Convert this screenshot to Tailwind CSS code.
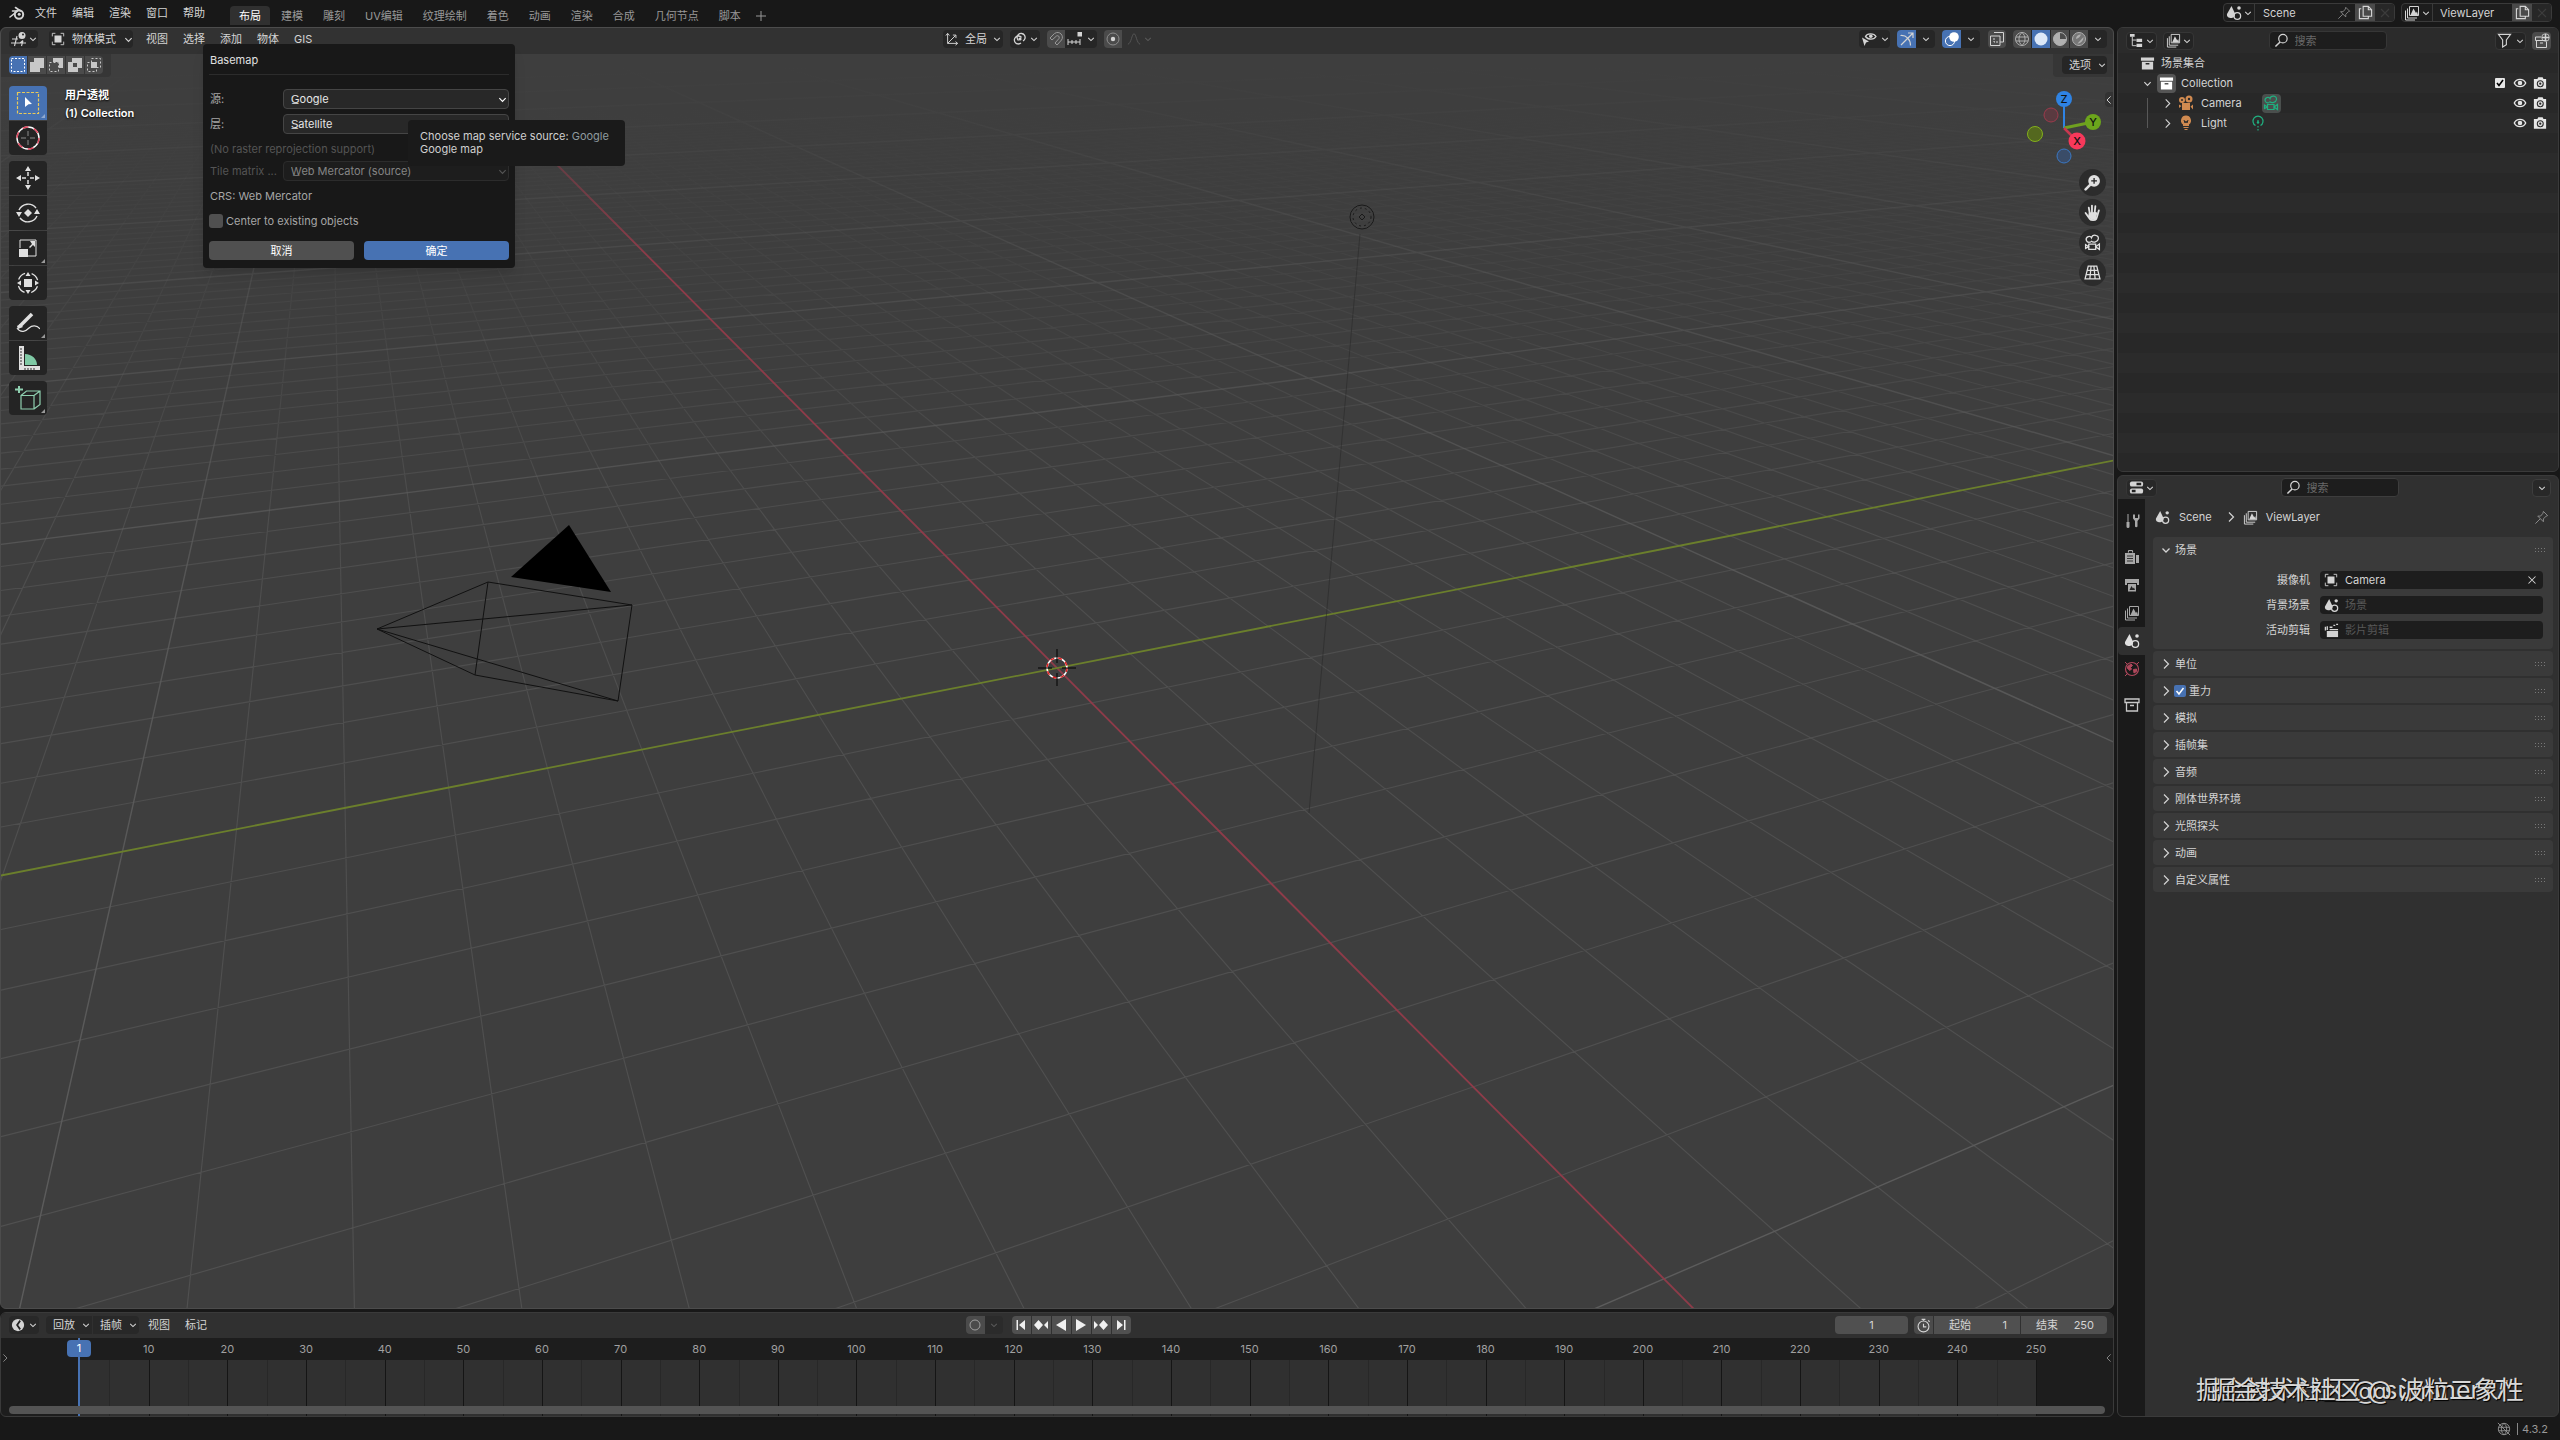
<!DOCTYPE html>
<html lang="zh-CN">
<head>
  <meta charset="UTF-8">
  <meta name="viewport" content="width=device-width, initial-scale=1.0">
  <title>Blender</title>
  <script src="https://cdn.jsdelivr.net/npm/@tailwindcss/browser@4"></script>
</head>
<body class="h-screen flex flex-col overflow-hidden bg-[#181818] text-[#d4d4d4] text-[11px] leading-4 font-[Inter,'Noto_Sans_CJK_SC',sans-serif]">

  <!-- Icon sprite -->
  <svg class="hidden">
    <symbol id="down" viewBox="0 0 10 10"><path d="M1.5 3.5L5 7l3.500-3.500" fill="none" stroke="currentColor" stroke-width="1.300"/></symbol>
    <symbol id="right" viewBox="0 0 10 10"><path d="M3 0.500L7.500 5 3 9.500" fill="none" stroke="currentColor" stroke-width="1.200"/></symbol>
    <symbol id="left" viewBox="0 0 10 10"><path d="M7 0.500L2.500 5 7 9.500" fill="none" stroke="currentColor" stroke-width="1.200"/></symbol>
    <symbol id="cross" viewBox="0 0 16 16"><path d="M4 4l8 8M12 4l-8 8" stroke="currentColor" stroke-width="1.200"/></symbol>
    <symbol id="blender" viewBox="0 0 16 16"><circle cx="10" cy="9.500" r="4.200" fill="none" stroke="currentColor" stroke-width="2"/><circle cx="10.200" cy="9.300" r="1.500" fill="currentColor"/><path d="M1 12l7.500-6H3.500M6.500 2.500l5 3.500" fill="none" stroke="currentColor" stroke-width="1.600" stroke-linecap="round"/></symbol>
    <symbol id="view3d" viewBox="0 0 16 16"><circle cx="11" cy="4.500" r="3.500" fill="currentColor"/><circle cx="12" cy="3.500" r="1" fill="#222"/><path d="M1 8h6M0 12h15M6 5L3.500 15M12 9.500l-1.500 5.500M9 12l3-2.500" fill="none" stroke="currentColor" stroke-width="1.100"/></symbol>
    <symbol id="object" viewBox="0 0 16 16"><rect x="4" y="4" width="8" height="8" fill="currentColor"/><path d="M1.500 5V1.500H5M11 1.500h3.500V5M14.500 11v3.500H11M5 14.500H1.500V11" fill="none" stroke="currentColor"/></symbol>
    <symbol id="orient" viewBox="0 0 16 16"><path d="M3 2v11h11M3 13L12 4M1 4l2-2.500L5 4M12 11l2.500 2-2.500 2M9 3.500h3.500V7" fill="none" stroke="currentColor" stroke-width="1.100"/></symbol>
    <symbol id="pivot" viewBox="0 0 16 16"><path d="M6.500 9.500A4 4 0 1 1 11 10M9.500 6.500A4 4 0 1 0 9 12" fill="none" stroke="currentColor" stroke-width="1.300"/><circle cx="8" cy="8" r="1.600" fill="currentColor"/></symbol>
    <symbol id="magnet" viewBox="0 0 16 16"><path d="M2 7l4.500-4.500c5-3.500 10 2.500 7 6.500L9 14l-2-2 4-4.500C12 5.500 10 4 8.500 5L4 9z" fill="none" stroke="currentColor"/></symbol>
    <symbol id="snap" viewBox="0 0 16 16"><path d="M1 8v6M5 9v4M9 9v4M13 8v6M1 11h12" stroke="currentColor"/><rect x="10.500" y="1" width="4.500" height="4.500" fill="currentColor"/></symbol>
    <symbol id="prop" viewBox="0 0 16 16"><circle cx="8" cy="8" r="6" fill="none" stroke="#8c8c8c"/><circle cx="8" cy="8" r="2.200" fill="currentColor"/></symbol>
    <symbol id="falloff" viewBox="0 0 16 16"><path d="M1 14C5 13 5.500 2 8 2s3 11 7 12" fill="none" stroke="currentColor"/></symbol>
    <symbol id="seleye" viewBox="0 0 16 16"><path d="M4.500 5.500C6 2 13 2 15 5.500 13 9 7 9 4.500 5.500z" fill="none" stroke="currentColor" stroke-width="1.300"/><circle cx="9.800" cy="5.300" r="1.800" fill="currentColor"/><path d="M1 6.500l7 4-3 1-1.500 3.500z" fill="currentColor"/></symbol>
    <symbol id="gizmo" viewBox="0 0 16 16"><path d="M2 14L13.500 2.500M9 2h5v5M1.500 4.500c6-.5 10 4 10 10" fill="none" stroke="currentColor" stroke-width="1.200"/></symbol>
    <symbol id="overlay" viewBox="0 0 16 16"><circle cx="10" cy="6" r="4.800" fill="currentColor"/><circle cx="6" cy="10" r="4.600" fill="none" stroke="currentColor"/></symbol>
    <symbol id="xray" viewBox="0 0 16 16"><path d="M5 1.500h9.500v9.500H11M1.500 5H11v9.500H1.500z" fill="none" stroke="currentColor"/><path d="M5 7v4h4" fill="none" stroke="currentColor" stroke-dasharray="2 1"/></symbol>
    <symbol id="wire" viewBox="0 0 16 16"><path d="M8 1.500a6.500 6.500 0 1 0 0 13 6.500 6.500 0 0 0 0-13zm0 0c-4 3-4 10 0 13M8 1.500c4 3 4 10 0 13M2 6h12M2 10h12" fill="none" stroke="currentColor"/></symbol>
    <symbol id="solid" viewBox="0 0 16 16"><circle cx="8" cy="8" r="6.500" fill="currentColor"/></symbol>
    <symbol id="matprev" viewBox="0 0 16 16"><circle cx="8" cy="8" r="6.500" fill="none" stroke="currentColor"/><path d="M8 1.500A6.500 6.500 0 0 0 8 14.500V8h6.500A6.500 6.500 0 0 1 8 14.500V8z" fill="currentColor"/></symbol>
    <symbol id="rendered" viewBox="0 0 16 16"><circle cx="8" cy="8" r="6.500" fill="#777" stroke="currentColor"/><path d="M5 8c0-3 2-4.500 5-4.500C9 6 8 7 5 8zM12.500 6c0 4-3 6.500-6 6.500" fill="currentColor"/></symbol>
    <symbol id="scene" viewBox="0 0 16 16"><path d="M5.500 1L9 8.500C9.500 12 7 13 5 13S.5 12 1 9z" fill="currentColor"/><circle cx="13" cy="3" r="1.800" fill="currentColor"/><circle cx="11.300" cy="11" r="3.300" fill="none" stroke="currentColor" stroke-width="1.300"/></symbol>
    <symbol id="layers" viewBox="0 0 16 16"><path d="M5.500 1.500h9v9h-9zM3.500 3.500v9.500H13M1.500 5.500V15H11" fill="none" stroke="currentColor"/><path d="M6.500 10l3-6.500L12 8l1-1.500 1 3.500z" fill="currentColor"/></symbol>
    <symbol id="pin" viewBox="0 0 16 16"><path d="M10 1.500l4.500 4.500-1.500.5-3 3v3L4 6.500h3l2.500-3zM6.500 9.500L1.500 14.500" fill="none" stroke="currentColor"/></symbol>
    <symbol id="copy" viewBox="0 0 16 16"><path d="M5.500 1.500h5.500L14.500 5v7h-9zM11 1.500V5h3.500M3.500 4H1.500v10.500H11v-2" fill="none" stroke="currentColor" stroke-width="1.200"/></symbol>
    <symbol id="outliner" viewBox="0 0 16 16"><path d="M1 1h5v3H1zM8 6h6v3.500H8zM8 11.500h6V15H8z" fill="currentColor"/><path d="M3.500 4v9.500H8M3.500 7.500H8" fill="none" stroke="currentColor"/></symbol>
    <symbol id="search" viewBox="0 0 16 16"><circle cx="9.500" cy="6" r="4.500" fill="none" stroke="currentColor" stroke-width="1.300"/><path d="M6.500 9.500l-5 5" stroke="currentColor" stroke-width="1.600"/></symbol>
    <symbol id="filter" viewBox="0 0 16 16"><path d="M1.500 1.500h13L10 7.500v5L6 15V7.500z" fill="none" stroke="currentColor" stroke-width="1.200"/></symbol>
    <symbol id="newcol" viewBox="0 0 16 16"><path d="M7 4H1.500v3.500h11M2.500 7.500v7h10v-6M6 10h3" fill="none" stroke="currentColor"/><path d="M11.500 1v7M8 4.500h7" stroke="currentColor" stroke-width="1.500"/><circle cx="11.500" cy="4.500" r="3.800" fill="none" stroke="currentColor" stroke-width=".8"/></symbol>
    <symbol id="archive" viewBox="0 0 16 16"><path d="M1 1.500h14V5H1zM2 6h12v8.500H2zM6 7.500v1.500h4V7.500z" fill="currentColor" fill-rule="evenodd"/></symbol>
    <symbol id="archiveo" viewBox="0 0 16 16"><path d="M1 2h14v3.500H1zM2.500 5.500V14h11V5.500M6 8.500h4" fill="none" stroke="currentColor" stroke-width="1.300"/></symbol>
    <symbol id="eye" viewBox="0 0 16 16"><path d="M1.500 8C4 2.500 12 2.500 14.500 8 12 13.500 4 13.500 1.500 8z" fill="none" stroke="currentColor" stroke-width="1.600"/><circle cx="8" cy="8" r="2.600" fill="currentColor"/></symbol>
    <symbol id="photo" viewBox="0 0 16 16"><path d="M1 3.500h4L6 1.500h5l1 2h3v11H1z" fill="currentColor"/><circle cx="8.300" cy="8.800" r="4" fill="#2a2a2a"/><circle cx="8.300" cy="8.800" r="2.800" fill="currentColor"/><circle cx="8.300" cy="8.800" r="1.300" fill="#2a2a2a"/></symbol>
    <symbol id="cam" viewBox="0 0 16 16"><circle cx="4" cy="5" r="3" fill="currentColor"/><circle cx="11" cy="4" r="3.500" fill="currentColor"/><path d="M4 8h8v7H4zM12.500 11.500L15 9.500v5zM1 9.500l2.500 1.500-2.500 2z" fill="currentColor"/><circle cx="4" cy="5" r="1" fill="#2a2a2a"/><circle cx="11" cy="4" r="1.200" fill="#2a2a2a"/></symbol>
    <symbol id="camo" viewBox="0 0 16 16"><path d="M6.500 7.500C2 9 .5 4 4 2.500c1.500-.5 2.500 0 3 1C8 0 14 .5 13.500 4.500 13 7.500 9 8.500 6.500 6.500M4.500 9.500h6.500v5H4.500zM11 12l3.500-2.500v5zM4.500 12l-3-2v3.500z" fill="none" stroke="currentColor" stroke-width="1.200"/></symbol>
    <symbol id="bulb" viewBox="0 0 16 16"><path d="M8 .5a5 5 0 0 0-3 9V11h6V9.500a5 5 0 0 0-3-9z" fill="currentColor"/><path d="M5.500 12.500h5M6.500 14.500h3" stroke="currentColor"/><path d="M6 5l1 3 1-2 1 2 1-3" fill="none" stroke="#2a2a2a"/></symbol>
    <symbol id="lightdata" viewBox="0 0 16 16"><path d="M5.500 10.500a5 5 0 1 1 5 0M8 5v3M8 11v1.500M8 14v1.500" fill="none" stroke="currentColor" stroke-width="1.200"/><circle cx="8" cy="7.500" r="1.200" fill="currentColor"/></symbol>
    <symbol id="zoomin" viewBox="0 0 16 16"><circle cx="9.500" cy="6.500" r="5.500" fill="currentColor"/><path d="M6 10l-4.500 4.500" stroke="currentColor" stroke-width="2.400" stroke-linecap="round"/><path d="M9.500 3.800v5.400M6.800 6.500h5.400" stroke="#222" stroke-width="1.200"/></symbol>
    <symbol id="hand" viewBox="0 0 16 16"><path d="M1.500 8.500l4 5.500c1 1.500 5 1.500 6 0 1-1.500 1.500-5 2.500-8M5.500 9L4.500 3.500M7.500 8.500V1.500M10 8.500l.7-6.500" fill="none" stroke="currentColor" stroke-width="1.700" stroke-linecap="round"/><path d="M4.500 8l7-.5 1 1-1.500 6H6.500L4 11z" fill="currentColor"/></symbol>
    <symbol id="persp" viewBox="0 0 16 16"><path d="M4 2h8l3 12H1zM3.200 6h9.600M2.200 10h11.600M6.700 2L5.500 14M9.300 2l1.200 12" fill="none" stroke="currentColor" stroke-width="1.200"/></symbol>
    <symbol id="props" viewBox="0 0 16 16"><rect x="1" y="1.500" width="14" height="5.500" rx="2" fill="currentColor"/><rect x="1" y="9" width="14" height="5.500" rx="2" fill="currentColor"/><path d="M8 3h5v2.500H8zM3 10.500h4V13H3z" fill="#222"/></symbol>
    <symbol id="tool" viewBox="0 0 16 16"><path d="M4 1v8" stroke="currentColor"/><path d="M2.500 9h3v4.500a1.500 1.500 0 0 1-3 0zM9 1.500v4L11 8v5.500a1.500 1.500 0 0 0 2.500 0V8l2-2.500v-4h-1.500V5h-3V1.500z" fill="currentColor"/></symbol>
    <symbol id="render" viewBox="0 0 16 16"><path d="M1 4h10v11H1zM12 6h3v8h-3z" fill="currentColor"/><path d="M4 4V2h5v2M3 7h6M3 9.500h6M3 12h6" stroke="#333" fill="none"/><path d="M4.500 3.500v-2h4v2" stroke="currentColor" fill="none"/></symbol>
    <symbol id="output" viewBox="0 0 16 16"><path d="M1 2h14v6h-2V6H3v2H1zM4 7h8v7.500H4z" fill="currentColor"/><path d="M5.500 13l2-4 1.500 2.500 1-1 1 2.500z" fill="#222"/></symbol>
    <symbol id="world" viewBox="0 0 16 16"><circle cx="8" cy="8" r="6.500" fill="none" stroke="currentColor" stroke-width="1.200"/><path d="M3.500 5.500l3.500-2.500 1.500 1.500-2 2 1 1.500-1.500 1.500-2.500-2zM9.500 8.500l3-.5v2.500L10 12z" fill="currentColor" stroke="currentColor"/><path d="M1 1l2 2M15 1l-2 2M1 15l2-2" stroke="currentColor"/></symbol>
    <symbol id="clip" viewBox="0 0 16 16"><path d="M3 8.500h12V15H3z" fill="currentColor"/><path d="M1.500 4v4M3.500 3.500v4M6 4.500h3M10 2.500h2M13 1.500h2M6 7h9" stroke="currentColor" stroke-width="1.400"/></symbol>
    <symbol id="clock" viewBox="0 0 16 16"><circle cx="8" cy="8" r="7" fill="currentColor"/><path d="M10.500 3L7 8l3.500 5" fill="none" stroke="#222" stroke-width="2"/></symbol>
    <symbol id="stopwatch" viewBox="0 0 16 16"><circle cx="8" cy="9" r="5.800" fill="none" stroke="currentColor" stroke-width="1.200"/><path d="M6 1.500h4M8 1.500V3M8 6v3.500h3M13 2.500l1.500 1.500" fill="none" stroke="currentColor" stroke-width="1.200"/></symbol>
    <symbol id="globeoff" viewBox="0 0 16 16"><circle cx="8" cy="8" r="6.500" fill="none" stroke="currentColor"/><path d="M8 1.500c-4 3-4 10 0 13 4-3 4-10 0-13M2 6h12M2 10h12M1 1l14 14" fill="none" stroke="currentColor"/></symbol>
    <symbol id="grip" viewBox="0 0 12 6"><path d="M0 1.500h12M0 4.500h12" stroke="currentColor" stroke-dasharray="1 2"/></symbol>
    <symbol id="corner" viewBox="0 0 4 4"><path d="M4 0v4H0z" fill="currentColor"/></symbol>
  </svg>

  <!-- Top bar -->
  <header class="h-[27px] shrink-0 flex justify-between pl-[9px] pr-2">
    <div class="flex">
      <svg class="size-4 mt-[5px] mr-[10px]"><use href="#blender"/></svg>
      <nav class="flex gap-[15px] pt-[5px]">
        <a href="#">文件</a>
        <a href="#">编辑</a>
        <a href="#">渲染</a>
        <a href="#">窗口</a>
        <a href="#">帮助</a>
      </nav>
      <nav class="flex gap-[2px] ml-[25px] pt-[6px] text-[#989898]">
        <a href="#" class="px-[9px] pt-[2px] h-[19px] rounded-t bg-[#303030] text-white">布局</a>
        <a href="#" class="px-[9px] pt-[2px]">建模</a>
        <a href="#" class="px-[9px] pt-[2px]">雕刻</a>
        <a href="#" class="px-[9px] pt-[2px]">UV编辑</a>
        <a href="#" class="px-[9px] pt-[2px]">纹理绘制</a>
        <a href="#" class="px-[9px] pt-[2px]">着色</a>
        <a href="#" class="px-[9px] pt-[2px]">动画</a>
        <a href="#" class="px-[9px] pt-[2px]">渲染</a>
        <a href="#" class="px-[9px] pt-[2px]">合成</a>
        <a href="#" class="px-[9px] pt-[2px]">几何节点</a>
        <a href="#" class="px-[9px] pt-[2px]">脚本</a>
        <button class="px-1 h-[19px]" aria-label="添加工作区"><svg class="size-[10px]" viewBox="0 0 10 10"><path d="M5 0v10M0 5h10" stroke="currentColor"/></svg></button>
      </nav>
    </div>
    <div class="flex gap-[6px] pt-[3px]">
      <div class="flex h-[19px] rounded border border-[#3a3a3a] bg-[#1d1d1d] overflow-hidden">
        <button class="w-[31px] flex items-center justify-center gap-[2px] border-r border-[#3a3a3a]" aria-label="场景"><svg class="size-4"><use href="#scene"/></svg><svg class="size-2"><use href="#down"/></svg></button>
        <input class="w-[82px] pl-2" value="Scene" aria-label="场景名称">
        <button class="w-[18px] text-[#8a8a8a]" aria-label="固定"><svg class="size-[14px]"><use href="#pin"/></svg></button>
        <button class="w-5 bg-[#4a4a4a] flex items-center justify-center" aria-label="新建场景"><svg class="size-[15px]"><use href="#copy"/></svg></button>
        <button class="w-[19px] bg-[#272727] text-[#3c3c3c] flex items-center justify-center" aria-label="删除场景"><svg class="size-4"><use href="#cross"/></svg></button>
      </div>
      <div class="flex h-[19px] rounded border border-[#3a3a3a] bg-[#1d1d1d] overflow-hidden">
        <button class="w-[31px] flex items-center justify-center gap-[2px] border-r border-[#3a3a3a]" aria-label="视图层"><svg class="size-4"><use href="#layers"/></svg><svg class="size-2"><use href="#down"/></svg></button>
        <input class="w-[79px] pl-[7px]" value="ViewLayer" aria-label="视图层名称">
        <button class="w-5 bg-[#4a4a4a] flex items-center justify-center" aria-label="新建视图层"><svg class="size-[15px]"><use href="#copy"/></svg></button>
        <button class="w-[19px] bg-[#272727] text-[#3c3c3c] flex items-center justify-center" aria-label="删除视图层"><svg class="size-4"><use href="#cross"/></svg></button>
      </div>
    </div>
  </header>

  <main class="flex-1 min-h-0 flex gap-[3px] pr-px">
    <div class="flex-1 min-w-0 flex flex-col gap-[3px]">

      <!-- 3D viewport -->
      <section class="relative flex-1 min-h-0 bg-[#3e3e3e] rounded-md border border-[#4c4c4c]">
        <svg class="absolute inset-0 w-full h-full" viewBox="1 28 2112 1280" preserveAspectRatio="xMinYMin slice">
          <defs>
            <linearGradient id="minor-fade" gradientUnits="userSpaceOnUse" x1="0" y1="0" x2="0" y2="1310">
              <stop offset="0.080" stop-color="#585858" stop-opacity="0"/>
              <stop offset="0.200" stop-color="#585858" stop-opacity="0.200"/>
              <stop offset="0.400" stop-color="#585858" stop-opacity="0.600"/>
              <stop offset="1" stop-color="#585858" stop-opacity="0.700"/>
            </linearGradient>
            <linearGradient id="major-fade" gradientUnits="userSpaceOnUse" x1="0" y1="0" x2="0" y2="1310">
              <stop offset="0.050" stop-color="#5c5c5c" stop-opacity="0"/>
              <stop offset="0.200" stop-color="#5c5c5c" stop-opacity="0.400"/>
              <stop offset="0.450" stop-color="#5c5c5c" stop-opacity="0.800"/>
              <stop offset="1" stop-color="#5c5c5c"/>
            </linearGradient>
            <linearGradient id="red-fade" gradientUnits="userSpaceOnUse" x1="0" y1="0" x2="0" y2="1310">
              <stop offset="0.050" stop-color="#8f3b49" stop-opacity="0"/>
              <stop offset="0.200" stop-color="#8f3b49"/>
            </linearGradient>
          </defs>
          <path id="grid-minor" fill="none" stroke="url(#minor-fade)" stroke-width="1.100"/>
          <path id="grid-major" fill="none" stroke="url(#major-fade)" stroke-width="1.400"/>
          <path id="axis-x" fill="none" stroke="url(#red-fade)" stroke-width="1.800"/>
          <path id="axis-y" fill="none" stroke="#6b7f2c" stroke-width="1.800"/>
          <!-- camera -->
          <path d="M511 577L569 525l42 67z" fill="#000"/>
          <path d="M377 629L488 582 632 605 618 701 475 675zM377 629L632 605M377 629L618 701M488 582L475 675" fill="none" stroke="#111"/>
          <!-- light -->
          <circle cx="1362" cy="217" r="12" fill="none" stroke="#1a1a1a"/>
          <circle cx="1362" cy="217" r="9" fill="none" stroke="#1a1a1a" stroke-dasharray="2 3"/>
          <path d="M1362 214l3 3-3 3-3-3z" fill="none" stroke="#1a1a1a"/>
          <path d="M1360 234L1309 813" stroke="#252525" stroke-opacity=".5"/>
          <!-- 3D cursor -->
          <circle cx="1057" cy="668" r="10" fill="none" stroke="#fff" stroke-width="1.500"/>
          <circle cx="1057" cy="668" r="10" fill="none" stroke="#e02020" stroke-width="1.500" stroke-dasharray="4"/>
          <path d="M1057 649v14M1057 673v13M1038 668h14M1062 668h14" stroke="#000"/>
        </svg>

        <div class="relative">
          <div class="h-[26px] bg-[#323232]/95 rounded-t-md grid grid-cols-[1fr_auto_1fr] items-start pt-[2px] pl-2 pr-[6px]">
            <div class="flex items-center">
              <button class="w-[29px] h-[18px] rounded bg-[#262626] flex items-center justify-center gap-[2px]" aria-label="编辑器类型"><svg class="size-4"><use href="#view3d"/></svg><svg class="size-2"><use href="#down"/></svg></button>
              <button class="ml-[11px] w-[84px] h-[18px] rounded bg-[#262626] flex items-center pl-[2px]"><svg class="size-[14px] mr-[7px]"><use href="#object"/></svg>物体模式<svg class="size-[9px] ml-2"><use href="#down"/></svg></button>
              <nav class="ml-[13px] flex gap-[15px]">
                <a href="#">视图</a>
                <a href="#">选择</a>
                <a href="#">添加</a>
                <a href="#">物体</a>
                <a href="#">GIS</a>
              </nav>
            </div>
            <div class="flex items-center gap-[7px] pr-[17px]">
              <button class="w-[60px] h-[18px] rounded bg-[#262626] flex items-center justify-center gap-[6px]"><svg class="size-[14px]"><use href="#orient"/></svg>全局<svg class="size-2"><use href="#down"/></svg></button>
              <button class="w-[30px] h-[18px] rounded bg-[#262626] flex items-center justify-center gap-[2px]" aria-label="轴心点"><svg class="size-4"><use href="#pivot"/></svg><svg class="size-2"><use href="#down"/></svg></button>
              <div class="flex h-[18px] rounded bg-[#262626] overflow-hidden">
                <button class="w-[18px] bg-[#4b4b4b] text-[#999] flex items-center justify-center" aria-label="吸附"><svg class="size-4"><use href="#magnet"/></svg></button>
                <button class="w-8 flex items-center justify-center gap-[4px]" aria-label="吸附至"><svg class="size-4"><use href="#snap"/></svg><svg class="size-2"><use href="#down"/></svg></button>
              </div>
              <div class="flex h-[18px] rounded overflow-hidden">
                <button class="w-[18px] bg-[#4b4b4b] flex items-center justify-center" aria-label="衰减编辑"><svg class="size-4"><use href="#prop"/></svg></button>
                <button class="w-[34px] text-[#5a5a5a] flex items-center justify-center gap-[3px]" aria-label="衰减类型"><svg class="size-[14px]"><use href="#falloff"/></svg><svg class="size-2"><use href="#down"/></svg></button>
              </div>
            </div>
            <div class="flex items-center justify-end">
              <button class="w-[31px] h-[18px] rounded bg-[#262626] flex items-center justify-center gap-[4px]" aria-label="可选性"><svg class="size-4"><use href="#seleye"/></svg><svg class="size-2"><use href="#down"/></svg></button>
              <div class="ml-[7px] flex h-[18px] rounded bg-[#262626] overflow-hidden">
                <button class="w-[19px] bg-[#4772b3] flex items-center justify-center" aria-label="显示控件"><svg class="size-4"><use href="#gizmo"/></svg></button>
                <button class="w-[19px] flex items-center justify-center" aria-label="控件"><svg class="size-2"><use href="#down"/></svg></button>
              </div>
              <div class="ml-[7px] flex h-[18px] rounded bg-[#262626] overflow-hidden">
                <button class="w-[19px] bg-[#4772b3] text-white flex items-center justify-center" aria-label="显示叠加层"><svg class="size-4"><use href="#overlay"/></svg></button>
                <button class="w-[19px] flex items-center justify-center" aria-label="叠加层"><svg class="size-2"><use href="#down"/></svg></button>
              </div>
              <button class="ml-2 w-[18px] h-[18px] rounded bg-[#4b4b4b] flex items-center justify-center" aria-label="透视模式"><svg class="size-4"><use href="#xray"/></svg></button>
              <div class="ml-[7px] flex h-[18px] rounded bg-[#262626] overflow-hidden gap-px text-[#b0b0b0]">
                <button class="w-[18px] bg-[#4b4b4b] flex items-center justify-center" aria-label="线框"><svg class="size-4"><use href="#wire"/></svg></button>
                <button class="w-[18px] bg-[#4772b3] text-[#dce8f8] flex items-center justify-center" aria-label="实体"><svg class="size-4"><use href="#solid"/></svg></button>
                <button class="w-[18px] bg-[#4b4b4b] flex items-center justify-center" aria-label="材质预览"><svg class="size-4"><use href="#matprev"/></svg></button>
                <button class="w-[18px] bg-[#4b4b4b] flex items-center justify-center" aria-label="渲染预览"><svg class="size-4"><use href="#rendered"/></svg></button>
                <button class="w-[18px] flex items-center justify-center text-[#d4d4d4]" aria-label="着色"><svg class="size-2"><use href="#down"/></svg></button>
              </div>
            </div>
          </div>

          <div class="flex justify-between">
            <!-- Select mode row -->
            <div class="h-[23px] w-[110px] pl-2 pt-[2px] bg-[#363636] rounded-br">
              <div class="flex h-[18px] w-[94px] gap-px rounded overflow-hidden text-[#c8c8c8]">
                <button class="flex-1 bg-[#4772b3] flex items-center justify-center" aria-label="新建选区"><svg class="size-4" viewBox="0 0 16 16"><path d="M1.500 1.500h13v13h-13z" fill="none" stroke="#fff" stroke-dasharray="2 1.500"/></svg></button>
                <button class="flex-1 bg-[#4b4b4b] flex items-center justify-center" aria-label="扩展选区"><svg class="size-4" viewBox="0 0 16 16"><path d="M5 1h10v10h-4v4H1V5h4z" fill="currentColor"/></svg></button>
                <button class="flex-1 bg-[#4b4b4b] flex items-center justify-center" aria-label="减去选区"><svg class="size-4" viewBox="0 0 16 16"><path d="M5 1h10v10h-4V5H5z" fill="currentColor"/><path d="M1.500 5.500h9v9h-9z" fill="none" stroke="currentColor" stroke-dasharray="2"/></svg></button>
                <button class="flex-1 bg-[#4b4b4b] flex items-center justify-center" aria-label="反转选区"><svg class="size-4" viewBox="0 0 16 16"><path d="M5 1h10v10h-4v4H1V5h4zM6 6v4h4V6z" fill="currentColor" fill-rule="evenodd"/></svg></button>
                <button class="flex-1 bg-[#4b4b4b] flex items-center justify-center" aria-label="相交选区"><svg class="size-4" viewBox="0 0 16 16"><path d="M5 5h6v6H5z" fill="currentColor"/><path d="M5.500 1.500h9v9h-4v4h-9v-9h4z" fill="none" stroke="currentColor" stroke-dasharray="2"/></svg></button>
              </div>
            </div>
            <div class="h-[23px] w-[60px] pl-[9px] pt-[2px] bg-[#363636] rounded-bl">
              <button class="w-[45px] h-[18px] rounded bg-[#262626] flex items-center pl-[7px] gap-[7px]">选项<svg class="size-2"><use href="#down"/></svg></button>
            </div>
          </div>

          <div class="flex justify-between pl-2 pr-[2px]">
            <div class="flex gap-[18px] pt-[9px]">
              <!-- Toolbar -->
              <div class="flex flex-col gap-[6px] w-[38px] text-[#e0e0e0]">
                <div class="flex flex-col gap-px rounded overflow-hidden">
                  <button class="relative h-[34px] bg-[#4772b3] flex items-center justify-center" aria-label="框选"><svg class="size-6" viewBox="0 0 24 24"><rect x="1.500" y="1.500" width="21" height="21" fill="none" stroke="#e8c95a" stroke-width="1.200" stroke-dasharray="3 1.500"/><path d="M9 6l7 7-3.500.3L9 16z" fill="#fff"/></svg><svg class="absolute right-[2px] bottom-[2px] size-1 text-[#8fa9d0]"><use href="#corner"/></svg></button>
                  <button class="h-[34px] bg-[#242424] flex items-center justify-center" aria-label="游标"><svg class="size-6" viewBox="0 0 24 24"><circle cx="12" cy="12" r="11" fill="none" stroke="#fff" stroke-width="1.400"/><circle cx="12" cy="12" r="11" fill="none" stroke="#e0405a" stroke-width="1.400" stroke-dasharray="5.760"/><path d="M12 5v5M12 14v5M5 12h5M14 12h5" stroke="#8a8a8a"/></svg></button>
                </div>
                <div class="flex flex-col gap-px rounded overflow-hidden">
                  <button class="h-[34px] bg-[#242424] flex items-center justify-center" aria-label="移动"><svg class="size-6" viewBox="0 0 24 24"><path d="M12 6v4M12 14v4M6 12h4M14 12h4" stroke="currentColor" stroke-width="1.500"/><path d="M12 0l3 5H9zM12 24l3-5H9zM0 12l5-3v6zM24 12l-5-3v6z" fill="currentColor"/></svg></button>
                  <button class="h-[34px] bg-[#242424] flex items-center justify-center" aria-label="旋转"><svg class="size-6" viewBox="0 0 24 24"><path d="M3 9a10 10 0 0 1 17 -2M21 15a10 10 0 0 1-17 2" fill="none" stroke="currentColor" stroke-width="1.400"/><path d="M0 11h6l-3 5zM18 13h6l-3-5zM12 8l4 4-4 4-4-4z" fill="currentColor"/></svg></button>
                  <button class="relative h-[34px] bg-[#242424] flex items-center justify-center" aria-label="缩放"><svg class="size-6" viewBox="0 0 24 24"><path d="M4 12V4h16v16h-8" fill="none" stroke="currentColor"/><path d="M3 13h9v8H3zM19 5v6l-2-2-3 3-1-1 3-3-2-3z" fill="currentColor"/></svg><svg class="absolute right-[2px] bottom-[2px] size-1 text-[#999]"><use href="#corner"/></svg></button>
                  <button class="h-[34px] bg-[#242424] flex items-center justify-center" aria-label="变换"><svg class="size-6" viewBox="0 0 24 24"><circle cx="12" cy="12" r="10" fill="none" stroke="currentColor" stroke-width="1.300" stroke-dasharray="9 6.700" stroke-dashoffset="-3.400"/><path d="M8 8h8v8H8zM12 1l2.500 4h-5zM12 23l2.500-4h-5zM1 12l4-2.500v5zM23 12l-4-2.500v5z" fill="currentColor"/></svg></button>
                </div>
                <div class="flex flex-col gap-px rounded overflow-hidden">
                  <button class="relative h-[34px] bg-[#242424] flex items-center justify-center" aria-label="标注"><svg class="size-6" viewBox="0 0 24 24"><path d="M4 15L16 3" stroke="currentColor" stroke-width="3.500"/><path d="M1 15l3-2 3 3-5 2z" fill="currentColor"/><path d="M1 17c4 6 9 3 12 0 3-3 8-3 11 1" fill="none" stroke="currentColor" stroke-width="1.200"/></svg><svg class="absolute right-[2px] bottom-[2px] size-1 text-[#999]"><use href="#corner"/></svg></button>
                  <button class="h-[34px] bg-[#242424] flex items-center justify-center" aria-label="测量"><svg class="size-6" viewBox="0 0 24 24"><path d="M3 0h5v20h16v4H3z" fill="currentColor"/><path d="M9 8c7 0 12 5 12 11H9z" fill="#7fc9a5"/><path d="M4 3h2M4 6h2M4 9h2M4 12h2M4 15h2M4 18h2M9 22v2M12 22v2M15 22v2M18 22v2" stroke="#333"/></svg></button>
                </div>
                <button class="relative h-[34px] rounded bg-[#242424] text-[#8fd0b0] flex items-center justify-center" aria-label="添加立方体"><svg class="size-[26px]" viewBox="0 0 26 26"><path d="M4 1v7M0 4.500h8" stroke="currentColor" stroke-width="2"/><path d="M6 10.500h13V24H6zM6 10.500L11.500 6H25v13.500L19 24M19 10.500L25 6" fill="none" stroke="currentColor" stroke-width="1.200"/></svg><svg class="absolute right-[2px] bottom-[2px] size-1 text-[#999]"><use href="#corner"/></svg></button>
              </div>
              <div class="font-semibold text-white leading-[18px] [text-shadow:0_1px_2px_#000]">
                <p>用户透视</p>
                <p>(1) Collection</p>
              </div>
            </div>

            <!-- Navigation gizmo -->
            <div class="flex flex-col w-[86px]">
              <div class="flex">
                <svg class="w-[76px] h-[80px] mt-[10px]" viewBox="2025 87 76 80">
                  <path d="M2064 128V99" stroke="#2f83e3" stroke-width="2"/>
                  <path d="M2064 128l29-6" stroke="#6f9f20" stroke-width="3"/>
                  <path d="M2064 128l13 13" stroke="#c93850" stroke-width="2.500"/>
                  <circle cx="2051" cy="115" r="7" fill="#5a3a40" stroke="#9c3a4c"/>
                  <circle cx="2035" cy="134" r="7.500" fill="#54681f" stroke="#83b01c"/>
                  <circle cx="2064" cy="156" r="7" fill="#3a4c68" stroke="#3a78c4"/>
                  <circle cx="2064" cy="99" r="8" fill="#2f83e3"/>
                  <circle cx="2093" cy="122" r="8" fill="#6ca51c"/>
                  <circle cx="2077" cy="141" r="8.500" fill="#f8385a"/>
                  <g font-size="11" text-anchor="middle" fill="#111" font-weight="500">
                    <text x="2064" y="103">Z</text>
                    <text x="2093" y="126">Y</text>
                    <text x="2077" y="145">X</text>
                  </g>
                </svg>
                <button class="mt-[15px] -mr-[2px] ml-auto w-2 h-[15px] rounded-l bg-[#333]" aria-label="侧栏"><svg class="size-2"><use href="#left"/></svg></button>
              </div>
              <div class="flex flex-col gap-[3px] mt-[2px] ml-[54px] w-[27px] text-[#e0e0e0]">
                <button class="size-[27px] rounded-full bg-[#2c2c2c] flex items-center justify-center" aria-label="缩放视图"><svg class="size-[17px]"><use href="#zoomin"/></svg></button>
                <button class="size-[27px] rounded-full bg-[#2c2c2c] flex items-center justify-center" aria-label="平移视图"><svg class="size-[17px]"><use href="#hand"/></svg></button>
                <button class="size-[27px] rounded-full bg-[#2c2c2c] flex items-center justify-center" aria-label="摄像机视图"><svg class="size-[17px]"><use href="#camo"/></svg></button>
                <button class="size-[27px] rounded-full bg-[#2c2c2c] flex items-center justify-center" aria-label="透视/正交"><svg class="size-[17px]"><use href="#persp"/></svg></button>
              </div>
            </div>
          </div>
        </div>

        <!-- Basemap dialog -->
        <form class="absolute left-[202px] top-[16px] w-[312px] h-[224px] px-[6px] rounded bg-[#181818] shadow-lg text-[#a6a6a6]">
          <h2 class="mt-2 pb-[6px] px-px border-b border-[#2c2c2c] text-[#e0e0e0]">Basemap</h2>
          <div class="mt-[14px] grid grid-cols-[74px_1fr] gap-y-[5px] items-center">
            <label for="source" class="pl-px">源:</label>
            <div class="relative">
              <select id="source" class="appearance-none w-full h-5 pl-[7px] rounded border border-[#454545] bg-[#282828] text-[#e6e6e6]"><option>G&#818;oogle</option></select>
              <svg class="absolute right-[2px] top-[6px] size-[9px] text-white pointer-events-none"><use href="#down"/></svg>
            </div>
            <label for="layer" class="pl-px">层:</label>
            <select id="layer" class="appearance-none w-full h-5 pl-[7px] rounded border border-[#454545] bg-[#282828] text-[#e6e6e6]"><option>S&#818;atellite</option></select>
          </div>
          <p class="mt-[7px] pl-px text-[#545454]">(No raster reprojection support)</p>
          <div class="mt-1 grid grid-cols-[74px_1fr] items-center text-[#545454]">
            <label for="matrix" class="pl-px">Tile matrix ...</label>
            <div class="relative">
              <select id="matrix" disabled class="appearance-none w-full h-5 pl-[7px] rounded border border-[#2c2c2c] bg-[#1d1d1d] text-[#858585] opacity-100"><option>W&#818;eb Mercator (source)</option></select>
              <svg class="absolute right-[2px] top-[6px] size-[9px] pointer-events-none"><use href="#down"/></svg>
            </div>
          </div>
          <p class="mt-[7px] pl-px">CRS: Web Mercator</p>
          <label class="mt-[9px] flex items-center gap-[3px]"><input type="checkbox" class="appearance-none size-[14px] rounded-[3px] bg-[#505050]">Center to existing objects</label>
          <div class="mt-3 grid grid-cols-2 gap-[10px] text-white">
            <button type="button" class="h-[19px] rounded bg-[#505050]">取消</button>
            <button type="submit" class="h-[19px] rounded bg-[#4772b3]">确定</button>
          </div>
        </form>
        <div role="tooltip" class="absolute left-[407px] top-[92px] w-[217px] h-[46px] pl-3 pt-[10px] rounded bg-[#1a1a1a] leading-[13px] text-[#d0d0d0]">
          <p>Choose map service source: <span class="text-[#8f9a9f]">Google</span></p>
          <p>Google map</p>
        </div>
      </section>

      <!-- Timeline -->
      <section class="h-[105px] shrink-0 flex flex-col bg-[#1d1d1d] rounded-md border border-[#3a3a3a] overflow-hidden">
        <div class="h-[25px] bg-[#303030] grid grid-cols-[1fr_auto_1fr] items-start pt-[3px] pl-2 pr-[6px]">
          <div class="flex items-center">
            <button class="w-[30px] h-[18px] rounded bg-[#282828] flex items-center justify-center gap-1" aria-label="编辑器类型"><svg class="size-[14px]"><use href="#clock"/></svg><svg class="size-2"><use href="#down"/></svg></button>
            <div class="ml-[7px] flex gap-px">
              <button class="w-[46px] h-[18px] rounded-l bg-[#282828] flex items-center pl-[7px] gap-[7px]">回放<svg class="size-2"><use href="#down"/></svg></button>
              <button class="w-[46px] h-[18px] rounded-r bg-[#282828] flex items-center pl-[7px] gap-[7px]">插帧<svg class="size-2"><use href="#down"/></svg></button>
            </div>
            <nav class="ml-[9px] flex gap-[15px]">
              <a href="#">视图</a>
              <a href="#">标记</a>
            </nav>
          </div>
          <div class="flex items-center gap-[9px] pr-[20px] text-[#f0f0f0]">
            <div class="flex h-[18px] rounded overflow-hidden bg-[#2b2b2b]">
              <button class="w-[19px] bg-[#4b4b4b] flex items-center justify-center" aria-label="自动插帧"><svg class="size-3" viewBox="0 0 12 12"><circle cx="6" cy="6" r="5" fill="none" stroke="#a0a0a0"/></svg></button>
              <button class="w-[18px] text-[#5a5a5a] flex items-center justify-center" aria-label="插帧选项"><svg class="size-2"><use href="#down"/></svg></button>
            </div>
            <div class="flex gap-px h-[18px] rounded overflow-hidden">
              <button class="w-[19px] bg-[#505050] flex items-center justify-center" aria-label="起始帧"><svg class="size-3" viewBox="0 0 12 12"><path d="M1.500 1h1.500v10H1.500zM10 1v10L4 6z" fill="currentColor"/></svg></button>
              <button class="w-[19px] bg-[#505050] flex items-center justify-center" aria-label="上一关键帧"><svg class="w-4 h-3" viewBox="0 0 16 12"><path d="M5.500 1l4.500 5-4.500 5L1 6zM15 2v8l-4-4z" fill="currentColor"/></svg></button>
              <button class="w-[19px] bg-[#505050] flex items-center justify-center" aria-label="倒放"><svg class="size-3" viewBox="0 0 12 12"><path d="M11 0v12L1 6z" fill="currentColor"/></svg></button>
              <button class="w-[19px] bg-[#505050] flex items-center justify-center" aria-label="播放"><svg class="size-3" viewBox="0 0 12 12"><path d="M1 0v12l10-6z" fill="currentColor"/></svg></button>
              <button class="w-[19px] bg-[#505050] flex items-center justify-center" aria-label="下一关键帧"><svg class="w-4 h-3" viewBox="0 0 16 12"><path d="M10.500 1L15 6l-4.500 5L6 6zM1 2v8l4-4z" fill="currentColor"/></svg></button>
              <button class="w-[19px] bg-[#505050] flex items-center justify-center" aria-label="结束帧"><svg class="size-3" viewBox="0 0 12 12"><path d="M9 1h1.500v10H9zM2 1v10l6-5z" fill="currentColor"/></svg></button>
            </div>
          </div>
          <div class="flex items-center justify-end gap-[6px]">
            <input class="w-[73px] h-[18px] rounded bg-[#505050] text-center" value="1" aria-label="当前帧">
            <div class="flex gap-px h-[18px] rounded overflow-hidden">
              <button class="w-[19px] bg-[#4b4b4b] flex items-center justify-center" aria-label="使用预览范围"><svg class="size-[15px]"><use href="#stopwatch"/></svg></button>
              <label class="w-[86px] bg-[#505050] flex items-center justify-between pl-[15px] pr-[13px]">起始<input class="w-8 text-right" value="1"></label>
              <label class="w-[86px] bg-[#505050] flex items-center justify-between pl-[15px] pr-[13px]">结束<input class="w-8 text-right" value="250"></label>
            </div>
          </div>
        </div>
        <div class="relative flex-1 flex px-[77px]">
          <svg class="absolute left-0 top-[16px] size-2 text-[#888]"><use href="#right"/></svg>
          <svg class="absolute right-0 top-[16px] size-2 text-[#888]"><use href="#left"/></svg>
          <div id="frames" class="relative flex-1">
            <div class="absolute inset-x-0 top-[22px] bottom-0 bg-[#303030]"></div>
          </div>
          <div class="absolute inset-x-2 bottom-[2px] h-2 rounded-full bg-[#545454]"></div>
        </div>
      </section>
    </div>

    <div class="w-[442px] shrink-0 flex flex-col gap-[3px]">
      <!-- Outliner -->
      <section class="h-[445px] shrink-0 flex flex-col rounded-md border border-[#3a3a3a] bg-[#282828] overflow-hidden">
        <div class="h-[25px] shrink-0 bg-[#2b2b2b] flex items-center justify-between pl-2 pr-[7px]">
          <div class="flex gap-[6px]">
            <button class="w-[31px] h-[18px] rounded border border-[#363636] bg-[#242424] flex items-center justify-center gap-[2px]" aria-label="编辑器类型"><svg class="size-[15px]"><use href="#outliner"/></svg><svg class="size-2"><use href="#down"/></svg></button>
            <button class="w-[31px] h-[18px] rounded border border-[#363636] bg-[#242424] flex items-center justify-center gap-[2px]" aria-label="显示模式"><svg class="size-[15px]"><use href="#layers"/></svg><svg class="size-2"><use href="#down"/></svg></button>
          </div>
          <label class="w-[118px] h-[19px] mr-[34px] rounded border border-[#363636] bg-[#1d1d1d] flex items-center pl-1 gap-[6px]"><svg class="size-[15px]"><use href="#search"/></svg><input type="search" class="w-20 placeholder:text-[#686868]" placeholder="搜索"></label>
          <div class="flex gap-[6px]">
            <button class="w-[31px] h-[18px] rounded border border-[#363636] bg-[#242424] flex items-center justify-center gap-1" aria-label="过滤"><svg class="size-[15px]"><use href="#filter"/></svg><svg class="size-2"><use href="#down"/></svg></button>
            <button class="w-[19px] h-[18px] rounded bg-[#4b4b4b] flex items-center justify-center" aria-label="新建集合"><svg class="size-4"><use href="#newcol"/></svg></button>
          </div>
        </div>
        <ul class="relative flex-1 leading-5 bg-[repeating-linear-gradient(#282828_0_20px,#2b2b2b_20px_40px)]">
          <li class="h-5 flex items-center pl-[22px] gap-[6px]"><svg class="size-[15px]"><use href="#archive"/></svg>场景集合</li>
          <li class="h-5 flex items-center pl-[25px] pr-[11px]">
            <svg class="size-[9px] mr-[5px]"><use href="#down"/></svg>
            <span class="size-[19px] rounded bg-[#555] flex items-center justify-center mr-[5px] text-white"><svg class="size-[15px]"><use href="#archive"/></svg></span>Collection
            <span class="relative ml-auto size-[10px]">
              <input type="checkbox" checked class="appearance-none absolute inset-0 rounded-[1px] bg-[#e6e6e6]" aria-label="启用集合">
              <svg class="absolute inset-0 size-[10px] text-black pointer-events-none" viewBox="0 0 10 10"><path d="M2 5l2 2.500L8 2" fill="none" stroke="currentColor" stroke-width="1.600"/></svg>
            </span>
            <svg class="size-[14px] ml-2 text-[#e6e6e6]"><use href="#eye"/></svg><svg class="size-[14px] ml-[6px] text-[#e6e6e6]"><use href="#photo"/></svg>
          </li>
          <li class="h-5 flex items-center pl-[45px] pr-[11px]">
            <svg class="size-[9px] mr-[6px]"><use href="#right"/></svg><svg class="size-4 mr-[7px] text-[#d08a50]"><use href="#cam"/></svg>Camera
            <span class="ml-5 size-[19px] rounded bg-[#4a4f4d] flex items-center justify-center text-[#20b080]"><svg class="size-4"><use href="#camo"/></svg></span>
            <svg class="size-[14px] ml-auto text-[#e6e6e6]"><use href="#eye"/></svg><svg class="size-[14px] ml-[6px] text-[#e6e6e6]"><use href="#photo"/></svg>
          </li>
          <li class="h-5 flex items-center pl-[45px] pr-[11px]">
            <svg class="size-[9px] mr-[6px]"><use href="#right"/></svg><svg class="size-4 mr-[7px] text-[#d08a50]"><use href="#bulb"/></svg>Light
            <svg class="size-4 ml-[23px] text-[#20b080]"><use href="#lightdata"/></svg>
            <svg class="size-[14px] ml-auto text-[#e6e6e6]"><use href="#eye"/></svg><svg class="size-[14px] ml-[6px] text-[#e6e6e6]"><use href="#photo"/></svg>
          </li>
          <li class="absolute left-[29px] top-[45px] w-px h-[30px] bg-[#585858]"></li>
        </ul>
      </section>

      <!-- Properties -->
      <section class="relative flex-1 min-h-0 flex flex-col rounded-md border border-[#3a3a3a] bg-[#303030] overflow-hidden">
        <div class="h-[23px] shrink-0 flex items-center justify-between pl-2 pr-[7px]">
          <button class="w-[31px] h-[18px] rounded border border-[#363636] bg-[#282828] flex items-center justify-center gap-[2px]" aria-label="编辑器类型"><svg class="size-[15px]"><use href="#props"/></svg><svg class="size-2"><use href="#down"/></svg></button>
          <label class="w-[118px] h-[19px] mr-[10px] rounded border border-[#3d3d3d] bg-[#1d1d1d] flex items-center pl-1 gap-[6px]"><svg class="size-[15px]"><use href="#search"/></svg><input type="search" class="w-20 placeholder:text-[#686868]" placeholder="搜索"></label>
          <button class="w-[19px] h-[18px] rounded border border-[#3d3d3d] bg-[#282828] flex items-center justify-center" aria-label="选项"><svg class="size-2"><use href="#down"/></svg></button>
        </div>
        <div class="flex-1 flex">
          <nav class="w-[27px] pt-[8px] bg-[#1a1a1a] flex flex-col items-center text-[#a8a8a8]">
            <a href="#" class="h-7 w-full flex items-center justify-center mb-2" aria-label="工具"><svg class="size-4"><use href="#tool"/></svg></a>
            <a href="#" class="h-7 w-full flex items-center justify-center" aria-label="渲染"><svg class="size-4"><use href="#render"/></svg></a>
            <a href="#" class="h-7 w-full flex items-center justify-center" aria-label="输出"><svg class="size-4"><use href="#output"/></svg></a>
            <a href="#" class="h-7 w-full flex items-center justify-center" aria-label="视图层"><svg class="size-4"><use href="#layers"/></svg></a>
            <a href="#" class="h-7 w-full flex items-center justify-center rounded-l bg-[#303030] text-[#e0e0e0]" aria-label="场景"><svg class="size-4"><use href="#scene"/></svg></a>
            <a href="#" class="h-7 w-full flex items-center justify-center mb-2 text-[#b0485c]" aria-label="世界环境"><svg class="size-4"><use href="#world"/></svg></a>
            <a href="#" class="h-7 w-full flex items-center justify-center text-[#c8c8c8]" aria-label="集合"><svg class="size-4"><use href="#archiveo"/></svg></a>
          </nav>
          <div class="flex-1 pl-2 pr-[5px] pt-[10px]">
            <div class="h-4 flex items-center mb-3 pl-[2px] pr-1">
              <svg class="size-[15px] mr-[9px]"><use href="#scene"/></svg>Scene
              <svg class="size-[10px] ml-[14px] mr-[7px]"><use href="#right"/></svg>
              <svg class="size-[15px] mr-2"><use href="#layers"/></svg>ViewLayer
              <svg class="size-[15px] ml-auto text-[#909090]"><use href="#pin"/></svg>
            </div>
            <div class="flex flex-col gap-[2px]" id="panels">
              <div class="h-[112px] rounded bg-[#3a3a3a] pl-2 pr-[6px]">
                <div class="h-[25px] flex items-center"><svg class="size-[10px] mr-1"><use href="#down"/></svg>场景<svg class="w-3 h-[6px] ml-auto text-[#777]"><use href="#grip"/></svg></div>
                <div class="mt-[9px] grid grid-cols-[149px_1fr] gap-x-[10px] gap-y-[7px] pr-1 items-center text-right">
                  <label for="camera">摄像机</label>
                  <div class="h-[18px] rounded bg-[#1d1d1d] flex items-center px-1"><svg class="size-[14px]"><use href="#object"/></svg><input id="camera" class="flex-1 min-w-0 pl-[7px]" value="Camera"><button aria-label="清除"><svg class="size-[14px]"><use href="#cross"/></svg></button></div>
                  <label for="bgscene">背景场景</label>
                  <div class="h-[18px] rounded bg-[#1d1d1d] flex items-center px-1"><svg class="size-[15px]"><use href="#scene"/></svg><input id="bgscene" class="flex-1 min-w-0 pl-[6px] placeholder:text-[#585858]" placeholder="场景"></div>
                  <label for="clipfield">活动剪辑</label>
                  <div class="h-[18px] rounded bg-[#1d1d1d] flex items-center px-1"><svg class="size-[15px]"><use href="#clip"/></svg><input id="clipfield" class="flex-1 min-w-0 pl-[6px] placeholder:text-[#585858]" placeholder="影片剪辑"></div>
                </div>
              </div>
              <div class="h-[25px] rounded bg-[#3a3a3a] pl-2 pr-[6px] flex items-center"><svg class="size-[10px] mr-1"><use href="#right"/></svg>单位<svg class="w-3 h-[6px] ml-auto text-[#777]"><use href="#grip"/></svg></div>
              <div class="h-[25px] rounded bg-[#3a3a3a] pl-2 pr-[6px] flex items-center"><svg class="size-[10px] mr-[3px]"><use href="#right"/></svg>
                <label class="flex items-center gap-[3px]"><span class="relative size-3"><input type="checkbox" checked class="appearance-none absolute inset-0 rounded-[2px] bg-[#4772b3]"><svg class="absolute inset-0 size-3 text-white" viewBox="0 0 12 12"><path d="M2.500 6l2.500 3 4.500-6" fill="none" stroke="currentColor" stroke-width="1.500"/></svg></span>重力</label><svg class="w-3 h-[6px] ml-auto text-[#777]"><use href="#grip"/></svg></div>
            </div>
          </div>
        </div>
        <!-- Watermark -->
        <div class="absolute right-[34px] bottom-[8px] w-[328px] h-9 text-[25px] leading-9 whitespace-nowrap text-[#d8d8d8] [text-shadow:1px_1px_1px_#000]">
          <p class="absolute left-0 top-0">掘金技术社区 @ summer77</p>
          <p class="absolute right-0 top-0">掘金技术社区 @ 波粒二象性</p>
        </div>
      </section>
    </div>
  </main>

  <!-- Status bar -->
  <footer class="h-[23px] shrink-0 flex items-center justify-end gap-[6px] pr-3 text-[#989898]">
    <svg class="size-[14px]"><use href="#globeoff"/></svg>
    <span class="border-l border-[#888] pl-1 leading-3">4.3.2</span>
  </footer>

  <script>
    // Ground plane projection: i runs along Y (green), j along X (red)
    function project(i, j) {
      const w = 1 + 0.020054 * i - 0.04546 * j;
      const x = (1057 + 95.907 * i - 14.95 * j) / w;
      const y = (668 - 1.28 * i + 2.95 * j) / w;
      return x.toFixed(1) + ' ' + y.toFixed(1);
    }

    const near = 0.3;
    const lineI = i => `M${project(i, -150)}L${project(i, (1 + 0.020054 * i - near) / 0.04546)}`;
    const lineJ = j => `M${project(Math.max(-150, (near - 1 + 0.04546 * j) / 0.020054), j)}L${project(300, j)}`;

    let minor = '';
    let major = '';
    for (let i = -80; i <= 200; i++) {
      if (i === 0) continue;
      if (i % 10) minor += lineI(i); else major += lineI(i);
    }
    for (let j = -120; j <= 22; j++) {
      if (j === 0) continue;
      if (j % 10) minor += lineJ(j); else major += lineJ(j);
    }
    document.getElementById('grid-minor').setAttribute('d', minor);
    document.getElementById('grid-major').setAttribute('d', major);
    document.getElementById('axis-x').setAttribute('d', lineI(0));
    document.getElementById('axis-y').setAttribute('d', lineJ(0));

    // Timeline frames
    const frames = document.getElementById('frames');
    for (let f = 5; f <= 250; f += 5) {
      const left = (f - 1) / 249 * 100;
      if (f % 10) {
        frames.innerHTML += `<i class="absolute top-[22px] bottom-0 w-px bg-[#282828]" style="left:${left}%"></i>`;
      } else {
        frames.innerHTML += `<i class="absolute top-[22px] bottom-0 w-px bg-[#151515]" style="left:${left}%"></i>
          <span class="absolute top-[3px] -translate-x-1/2 text-[#a0a0a0]" style="left:${left}%">${f}</span>`;
      }
    }
    frames.innerHTML += `<i class="absolute top-0 bottom-0 left-0 w-[2px] bg-[#4772b3]"></i>
      <b class="absolute top-[2px] left-px -translate-x-1/2 w-6 h-[17px] rounded bg-[#4772b3] text-white text-center font-normal">1</b>`;

    // Collapsed property panels
    const panels = document.getElementById('panels');
    ['模拟', '插帧集', '音频', '刚体世界环境', '光照探头', '动画', '自定义属性'].forEach(name => {
      panels.innerHTML += `
        <div class="h-[25px] rounded bg-[#3a3a3a] pl-2 pr-[6px] flex items-center"><svg class="size-[10px] mr-1"><use href="#right"/></svg>${name}<svg class="w-3 h-[6px] ml-auto text-[#777]"><use href="#grip"/></svg></div>
      `;
    });
  </script>
</body>
</html>
